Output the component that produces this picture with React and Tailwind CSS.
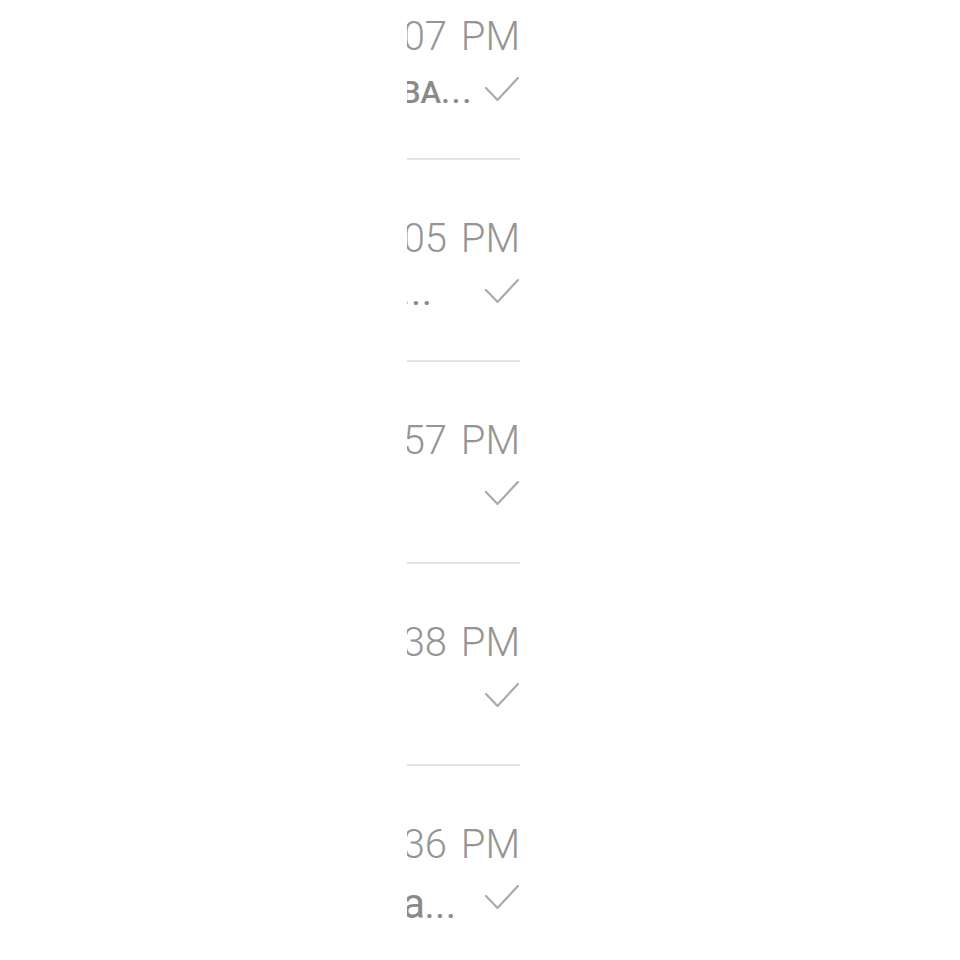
import React from "react";

const rows = [
  { time: "4:07 PM", subject: "Your EMBA", big: "", pad: "" },
  { time: "4:05 PM", subject: "Reminder ", big: "", pad: "pr-[40px]" },
  { time: "3:57 PM", subject: null, big: "", pad: "" },
  { time: "3:38 PM", subject: null, big: "", pad: "" },
  { time: "3:36 PM", subject: "Your invite to ", big: "a", pad: "pr-[16px]" },
];

function Check() {
  return (
    <svg
      width="36"
      height="28"
      viewBox="0 0 36 28"
      fill="none"
      stroke="#ababab"
      strokeWidth="2.2"
      strokeLinecap="round"
      strokeLinejoin="round"
      className="shrink-0"
    >
      <polyline points="2,13 13.5,25 34,3" />
    </svg>
  );
}

function MailRow({ time, subject, big, pad }) {
  return (
    <div className="h-[202px] border-b-2 border-[#e4e4e4] pt-[55px]">
      <div className="whitespace-nowrap text-right text-[40px] leading-[48px] font-light text-[#959595] [word-spacing:4px]">
        {time}
      </div>
      <div className="mt-[14px] flex h-[36px] items-start justify-end gap-[11px]">
        {subject !== null && (
          <span
            className={`whitespace-nowrap text-[31px] leading-[36px] font-medium text-[#8a8a8a] ${pad}`}
          >
            {subject}
            {big && (
              <span className="text-[42px] leading-none font-normal">{big}</span>
            )}
            <span className="tracking-[2px]">...</span>
          </span>
        )}
        <Check />
      </div>
    </div>
  );
}

export default function App() {
  return (
    <div className="h-[960px] w-full overflow-hidden bg-white font-['Roboto','Liberation_Sans',sans-serif]">
      <div className="ml-[407px] h-full w-[113px] overflow-hidden">
        <div className="-mt-[42px] ml-[-287px] w-[400px]">
          {rows.map((r) => (
            <MailRow key={r.time} {...r} />
          ))}
        </div>
      </div>
    </div>
  );
}
